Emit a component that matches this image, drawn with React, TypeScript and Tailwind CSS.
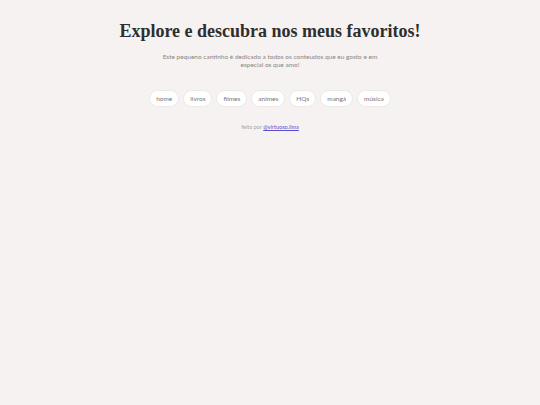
import React from 'react';

const LINKS = ['home', 'livros', 'filmes', 'animes', 'HQs', 'mangá', 'música'];

export default function App() {
  return (
    <div className="min-h-screen w-full bg-[#f6f2f1] flex flex-col items-center pt-[20px] font-['Lato',sans-serif]">
      {/* Header */}
      <h1 className="text-[18px] leading-[22px] font-bold text-[#2e2e2e] font-['Liberation_Serif',serif]">
        Explore e descubra nos meus favoritos!
      </h1>
      <p className="mt-[11px] w-[216px] text-center text-[6.5px] leading-[8px] text-[#8a8585]">
        Este pequeno cantinho é dedicado a todos os conteudos que eu gosto e em especial os que amo!
      </p>

      {/* Nav */}
      <nav className="mt-[21px] flex items-center gap-[4px]">
        {LINKS.map((l) => (
          <a
            key={l}
            className="h-[17px] px-[6px] flex items-center rounded-full bg-white border border-[#ece8e7] text-[6.5px] text-[#7a7676] cursor-pointer"
          >
            {l}
          </a>
        ))}
      </nav>

      <div className="mt-[17px] text-[5.5px] leading-[7px] text-[#a8a3a3]">
        feito por{' '}
        <a className="text-[#5a4fd0] underline cursor-pointer">@virtuoso.lima</a>
      </div>
    </div>
  );
}
